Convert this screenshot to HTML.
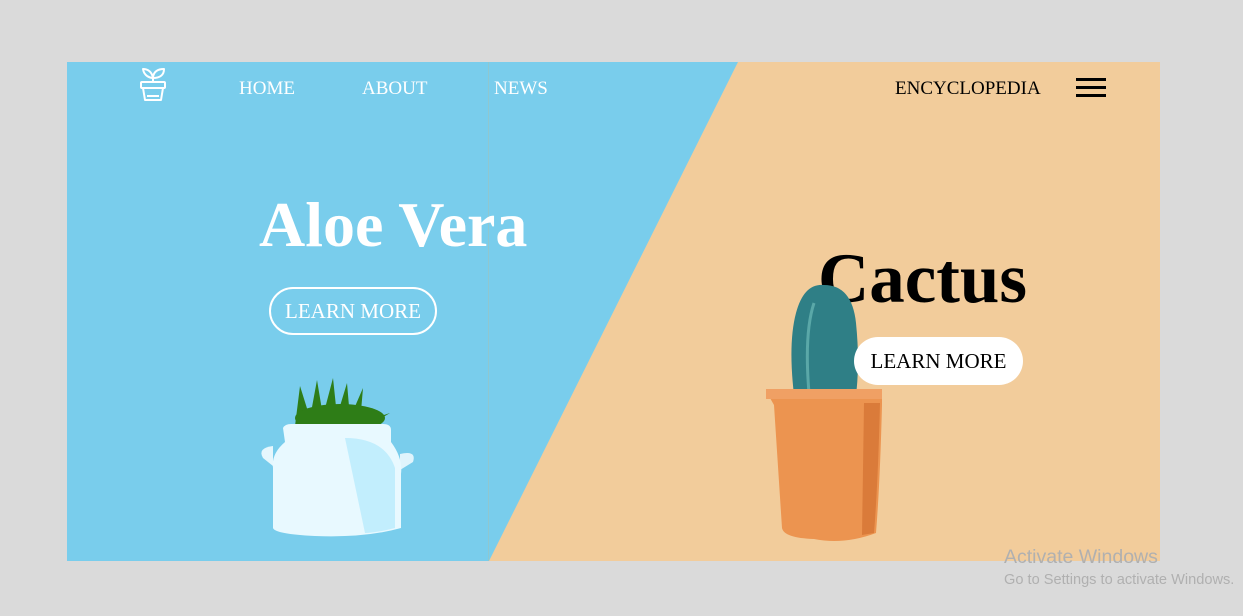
<!DOCTYPE html>
<html><head><style>
body{margin:0;width:1243px;height:616px;background:#dadada;position:relative;overflow:hidden;font-family:"Liberation Serif",serif}
.a{position:absolute}
</style></head><body>
<svg class="a" style="left:67px;top:62px" width="1093" height="499">
<rect width="1093" height="499" fill="#f2cc9b"/>
<polygon points="0,0 671,0 422,499 0,499" fill="#79cdec"/>
<line x1="421.5" y1="0" x2="421.5" y2="499" stroke="#8fc7cf" stroke-width="1"/>
</svg>
<svg class="a" style="left:138px;top:66px" width="30" height="38" fill="none" stroke="#fff" stroke-width="2" stroke-linejoin="round">
<path d="M15 16V8"/><path d="M15 12C12 12 6 10 5 3C10 3 14 6 15 12Z"/><path d="M15 11C16 5 20 3 26 3C26 9 22 12 15 12Z"/>
<rect x="3" y="16" width="24" height="6" rx="1"/><path d="M5 22L7 34H23L25 22"/><path d="M9 30H21"/>
</svg>
<div class="a" style="left:239px;top:78px;color:#fff;font-size:19px">HOME</div>
<div class="a" style="left:362px;top:78px;color:#fff;font-size:19px">ABOUT</div>
<div class="a" style="left:494px;top:78px;color:#fff;font-size:19px">NEWS</div>
<div class="a" style="left:895px;top:78px;color:#000;font-size:19px">ENCYCLOPEDIA</div>
<div class="a" style="left:1076px;top:78px;width:30px;height:3px;background:#000;box-shadow:0 8px 0 #000,0 16px 0 #000"></div>
<div class="a" style="left:259px;top:188px;color:#fff;font-size:64px;font-weight:bold;white-space:nowrap">Aloe Vera</div>
<div class="a" style="left:269px;top:287px;width:164px;height:44px;border:2px solid #fff;border-radius:24px;color:#fff;font-size:21px;text-align:center;line-height:44px">LEARN MORE</div>
<div class="a" style="left:818px;top:239px;color:#000;font-size:71px;font-weight:bold;white-space:nowrap">Cactus</div>
<svg class="a" style="left:255px;top:378px" width="165" height="160">
<g fill="#2e7d17"><path d="M40 48L45 8L55 40L62 2L68 38L78 0L82 38L92 5L95 40L108 10L105 45L135 35L110 50Z"/><ellipse cx="85" cy="40" rx="45" ry="14"/></g>
<path d="M18 68Q2 70 8 80L18 88Z" fill="#e6f7fd"/><path d="M145 76Q162 72 158 84L145 92Z" fill="#e0f4fc"/>
<path d="M28 50Q30 46 36 46H128Q136 46 136 52V64Q148 80 146 96V150Q110 160 60 158Q20 156 18 150V90Q16 76 30 64Z" fill="#e8f9ff"/>
<path d="M90 60Q130 60 140 90V150Q120 155 110 155Z" fill="#a8e6fb" opacity=".6"/>
</svg>
<svg class="a" style="left:764px;top:283px" width="122" height="262">
<path d="M30 112Q24 60 32 30Q40 0 60 2Q88 2 92 40Q96 80 92 112Z" fill="#2f7f86"/>
<path d="M45 110Q40 50 50 20" stroke="#5aa8a8" stroke-width="3" fill="none"/>
<path d="M2 108H118V122Q116 200 112 250Q80 262 50 256Q20 255 18 245L10 122Z" fill="#ec9450"/>
<rect x="2" y="106" width="116" height="10" fill="#f0a064"/>
<path d="M100 120H116Q114 200 110 250L98 252Z" fill="#cf6b2c" opacity=".6"/>
</svg>
<div class="a" style="left:854px;top:337px;width:169px;height:48px;background:#fff;border-radius:24px;color:#000;font-size:21px;text-align:center;line-height:48px">LEARN MORE</div>
<div class="a" style="left:1004px;top:546px;color:#b0b0b0;font-family:'Liberation Sans',sans-serif;font-size:19.5px">Activate Windows</div>
<div class="a" style="left:1004px;top:572px;color:#b0b0b0;font-family:'Liberation Sans',sans-serif;font-size:14.6px;white-space:nowrap">Go to Settings to activate Windows.</div>
</body></html>
